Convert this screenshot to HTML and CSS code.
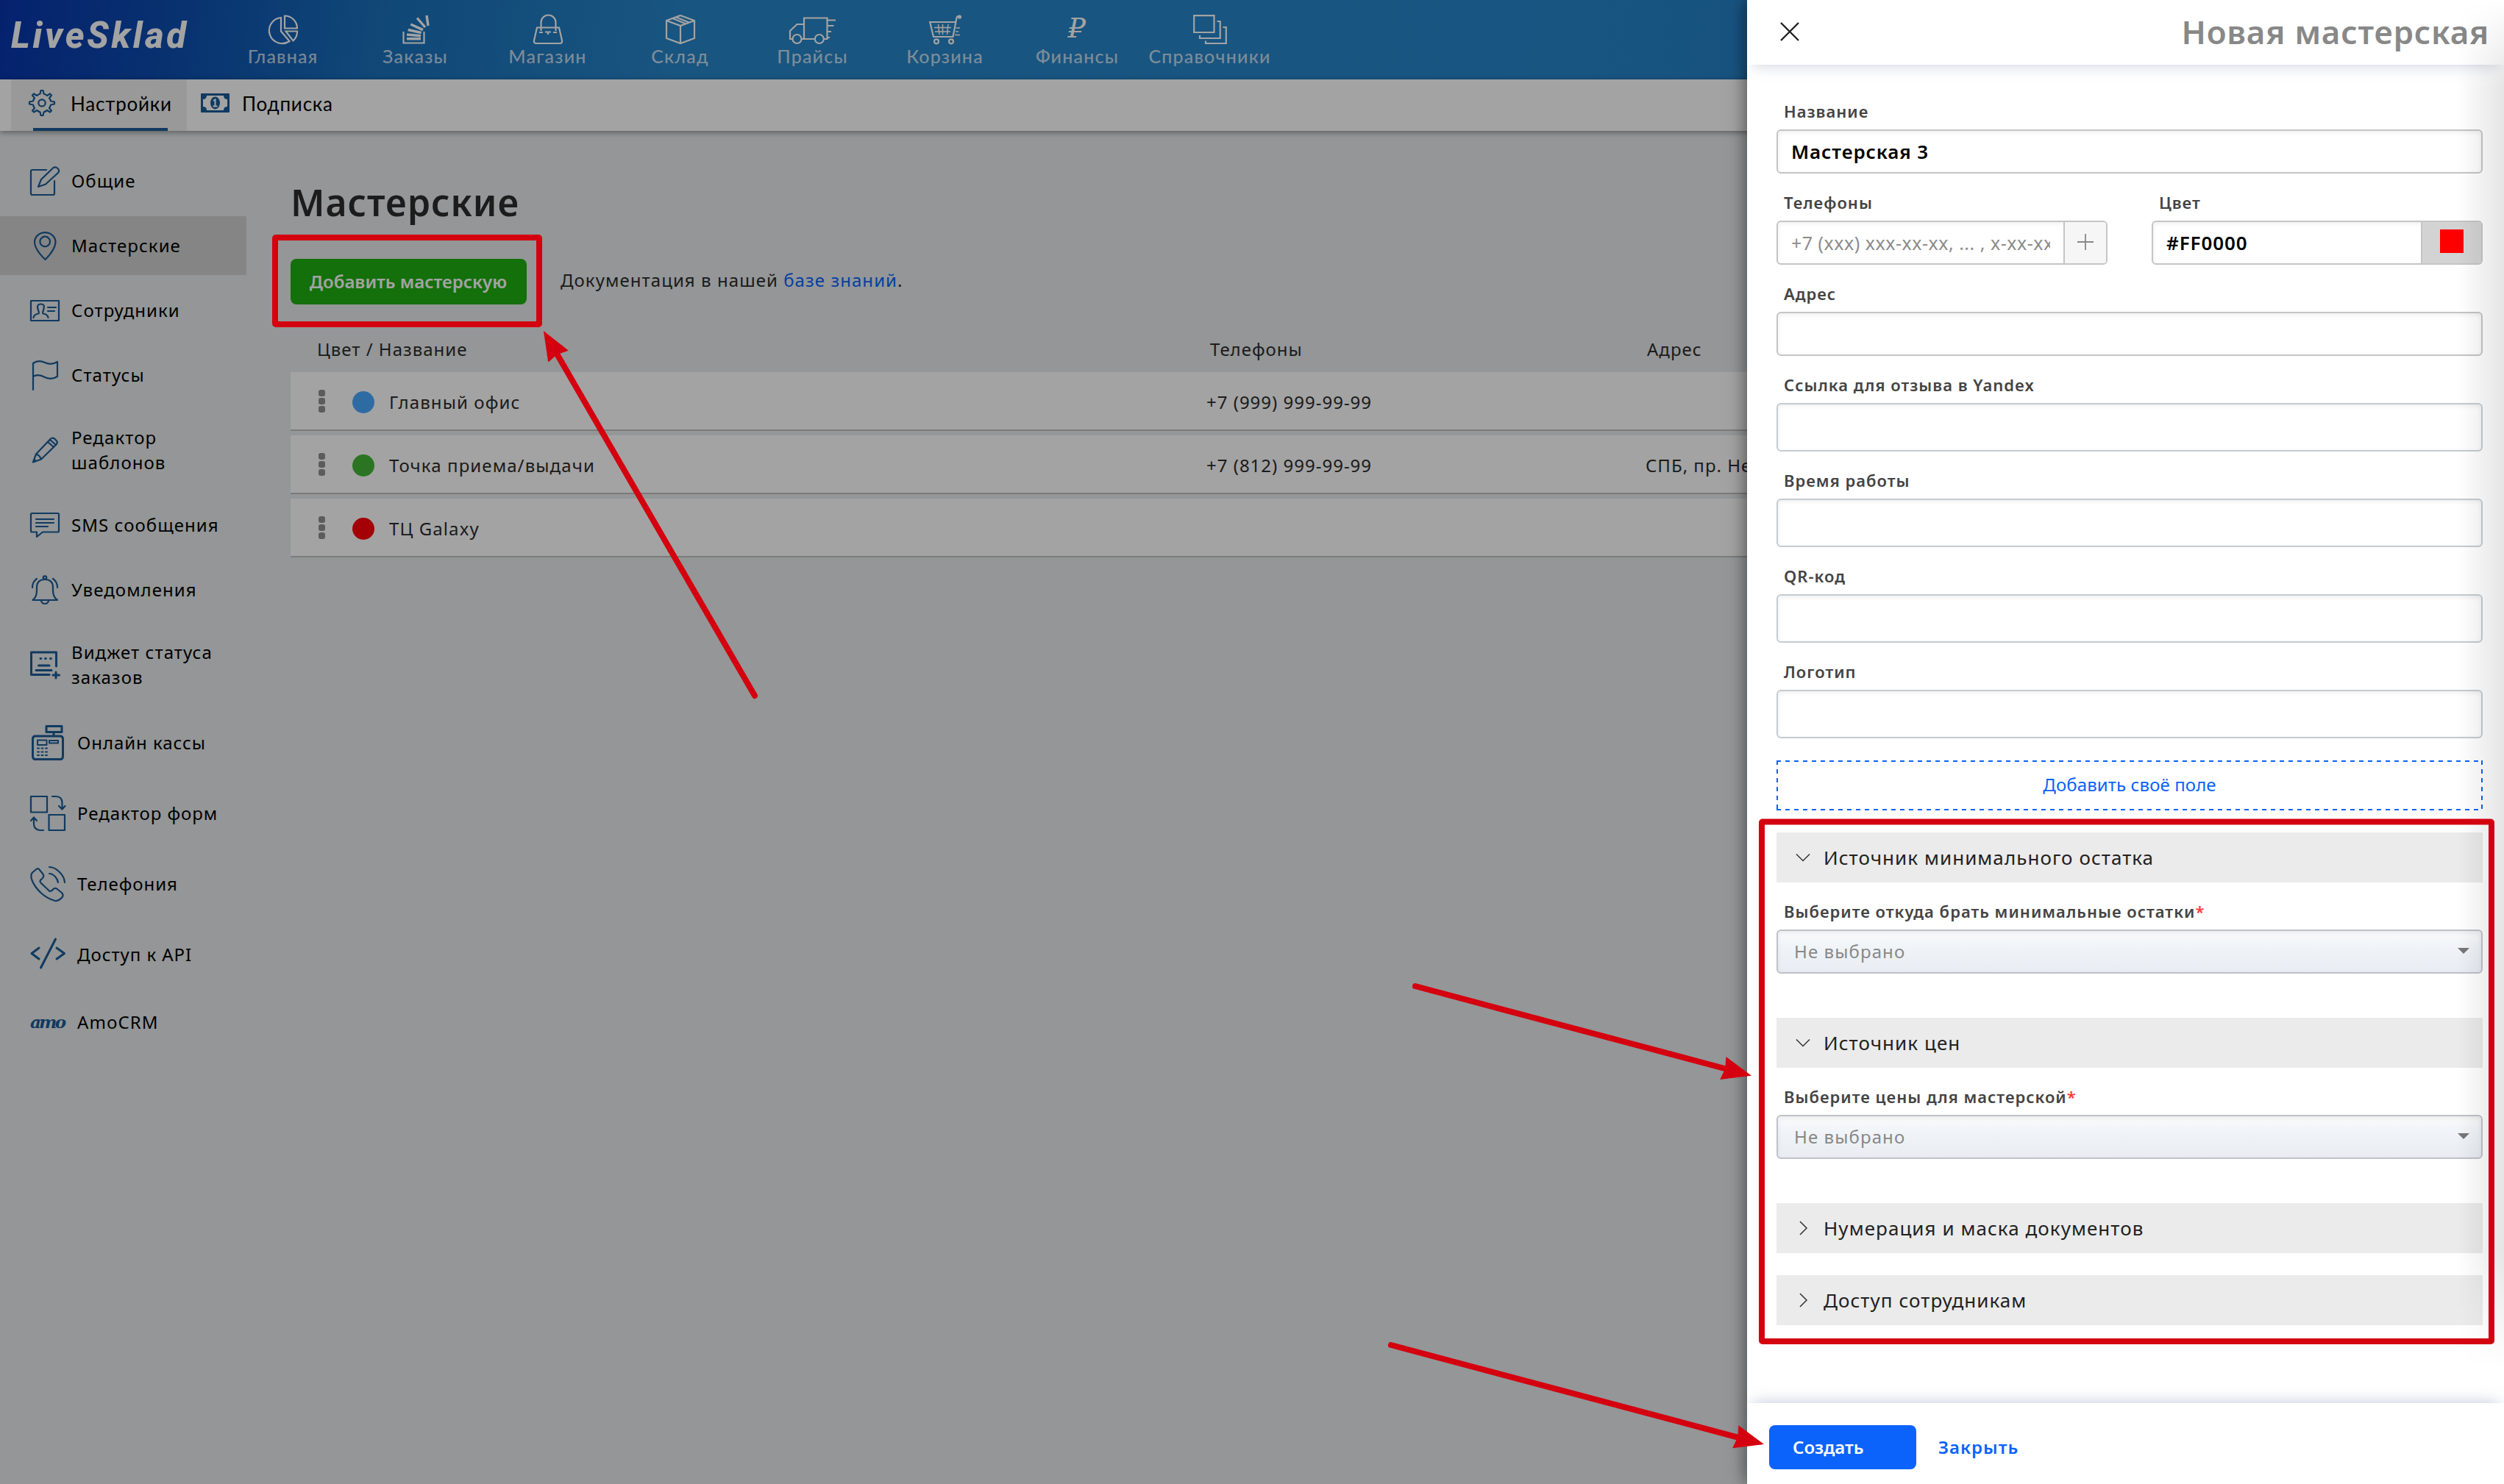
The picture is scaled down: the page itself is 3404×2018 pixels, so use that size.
FILE: index.html
```html
<!DOCTYPE html>
<html lang="ru">
<head>
    <meta charset="UTF-8">
    <meta name="viewport" content="width=device-width, initial-scale=1.0">
    <title>LiveSklad - Мастерские</title>
    <link rel="stylesheet" href="styles.css">
</head>
<body>
    <div class="page">
        <!-- Top navigation -->
        <header class="topbar">
            <div class="logo">LiveSklad</div>
            <nav class="nav">
                <a class="nav-item">
                    <svg width="40" height="40" viewBox="0 0 40 40"><path d="M17 4A17.600 17.600 0 1 0 28.500 36L17 22.500ZM22 1.500A17 17 0 0 1 39 18.500H22ZM23.500 22.500H39A17 17 0 0 1 33.500 35.500Z"/></svg>
                    <span>Главная</span>
                </a>
                <a class="nav-item">
                    <svg width="40" height="40" viewBox="-2 0 40 40"><path d="M1.500 23V38.500H29.500V23"/><path class="thick" d="M6 32.800H25M6 27L25 28.800M7.700 20.500L25.700 24.500M11.300 13L28 20.600M20 4.500L31 17M33 1L35 15"/></svg>
                    <span>Заказы</span>
                </a>
                <a class="nav-item">
                    <svg width="40" height="40" viewBox="0 0 40 40"><path d="M10.500 22V10.500a9.500 9.500 0 0 1 20 0V22M5 17.500H35L39 35q.5 4-3 4H4q-3.500 0-3-4ZM8 24h5M27 24h5M16 23.500h8M20 23v4"/></svg>
                    <span>Магазин</span>
                </a>
                <a class="nav-item">
                    <svg width="40" height="40" viewBox="0 0 40 40"><path d="M20 1L39 8V32L20 39L1 32V8ZM1 8L20 15L39 8M20 15V39M9.500 5L26.500 12M14.500 3.500L31.500 10.500"/></svg>
                    <span>Склад</span>
                </a>
                <a class="nav-item">
                    <svg width="64" height="40" viewBox="0 0 64 40"><path d="M4.500 33H1V22L10.500 13H20M16.500 33H34.500M20 33V4.500H51.500V33H47M51.500 7.500H63M51.500 15H60.500M51.500 23H57M51.500 31H55"/><circle cx="10.500" cy="33" r="6"/><circle cx="40.800" cy="33" r="6"/></svg>
                    <span>Прайсы</span>
                </a>
                <a class="nav-item">
                    <svg width="44" height="40" viewBox="0 0 44 40"><path d="M36 10H1.200L6 30H32.500L37.500 4Q38.500 1 42 2"/><path class="thin" d="M7 17.500H30M8 23H29M12.500 13L14 27M18.500 13V27M26 13L24.500 27M36.500 18H42M36 23H40M35 27.500H42"/><circle cx="10" cy="36.300" r="3"/><circle cx="30" cy="36.300" r="3"/><circle cx="41.500" cy="3" r="1.500"/></svg>
                    <span>Корзина</span>
                </a>
                <a class="nav-item">
                    <i class="ruble">₽</i>
                    <span>Финансы</span>
                </a>
                <a class="nav-item">
                    <svg width="46" height="40" viewBox="0 0 46 40"><path d="M1.200 1.200H28.500V24H1.200ZM32.500 9H36.700V32H9V28M40.500 17H44.800V39H17V35.500"/></svg>
                    <span>Справочники</span>
                </a>
            </nav>
        </header>

        <!-- Section tabs -->
        <div class="subbar">
            <a class="tab tab-active">
                <svg class="gear" width="36" height="36" viewBox="0 0 36 36"><path d="M15.500 5.500L16.500 1H19.500L20.500 5.500Q23.500 6.500 25 8L29 5.500L31 7.500L28 11.500Q29.500 13 30 15.500L35 16.500V19.500L30 20.500Q29.500 23 28 25L31 28.500L29 30.500L25 28Q23 29.500 20.500 30.500L19.500 35H16.500L15.500 30.500Q13 29.500 11 28L7 30.500L5 28.500L8 25Q6.500 23 6 20.500L1 19.500V16.500L6 15.500Q6.500 13 8 11.500L5 7.500L7 5.500L11 8Q13 6.500 15.500 5.500Z"/><circle cx="18" cy="18" r="4.700"/></svg>
                <span>Настройки</span>
            </a>
            <a class="tab">
                <svg class="note" width="39" height="26" viewBox="0 0 39 26"><rect width="39" height="26" rx="1" class="note-fill"/><path class="note-paper" d="M8 3H31Q31 8 36 8V18Q31 18 31 23H8Q8 18 3 18V8Q8 8 8 3Z"/><ellipse cx="19.500" cy="13" rx="6.500" ry="8.500" class="note-fill"/><path class="note-one" d="M17 10L19.500 8.500V17.500M16.500 17.500H22.500"/></svg>
                <span>Подписка</span>
            </a>
        </div>

        <div class="layout">
            <aside class="sidebar">
                <a class="side-item">
                    <svg width="40" height="40" viewBox="0 0 40 40"><path d="M22 5H3Q1 5 1 7V37Q1 39 3 39H31Q33 39 33 37V20M11 28L15 18L31 2.500Q34 0 37.500 3Q40.500 6 38 9L21 24.500Z"/></svg>
                    <span>Общие</span>
                </a>
                <a class="side-item side-active">
                    <svg width="40" height="40" viewBox="0 0 40 40"><path d="M20.500 39Q6 25 6 14.500A14.300 13.500 0 0 1 34.500 14.500Q34.500 25 20.500 39Z"/><circle cx="20.200" cy="14.500" r="6.800"/></svg>
                    <span>Мастерские</span>
                </a>
                <a class="side-item">
                    <svg width="40" height="40" viewBox="0 0 40 40"><path d="M1 7H39V34H1ZM24 16H35M24 21H33M4.500 30Q5 25.500 11.500 24.500Q12.500 23 11 20Q8 11.500 14.500 11.500Q21 11.500 18 20Q16.500 23 17.500 24.500Q24 25.500 24.500 30"/></svg>
                    <span>Сотрудники</span>
                </a>
                <a class="side-item">
                    <svg width="40" height="40" viewBox="0 0 40 40"><path d="M4 40V4Q11-1 20 3Q29 7 37 2V22Q29 27 20 23Q11 18 4 22"/></svg>
                    <span>Статусы</span>
                </a>
                <a class="side-item">
                    <svg width="40" height="40" viewBox="0 0 40 40"><path d="M4 36.500L8 25.500L27.500 5Q30 2.500 33 4.500L35.500 7Q38 10 35.500 12.500L15 32.500ZM8 25.500Q13 27 15 32.500M24 9L32 16M27 6L35 13M5 33L8 35"/></svg>
                    <span>Редактор<br>шаблонов</span>
                </a>
                <a class="side-item">
                    <svg width="40" height="40" viewBox="0 0 40 40"><path d="M2.500 4H37.500Q39 4 39 5.500V28Q39 29.500 37.500 29.500H17L9 36V29.500H2.500Q1 29.500 1 28V5.500Q1 4 2.500 4ZM8 12H32M8 17H32M8 22H24"/></svg>
                    <span>SMS сообщения</span>
                </a>
                <a class="side-item">
                    <svg width="40" height="40" viewBox="0 0 40 40"><path d="M3.500 34Q9 30 9 21V17Q9 6 20 6Q31 6 31 17V21Q31 30 37 34ZM15 35Q16 39 20 39Q24 39 25 35M3 17Q3 9 9 5M37 17Q37 9 31 5"/><circle cx="20" cy="3.500" r="2.200"/></svg>
                    <span>Уведомления</span>
                </a>
                <a class="side-item">
                    <svg class="bold" width="40" height="40" viewBox="0 0 40 40"><path d="M35.500 22V3H1.500V33.500H26M35 30V38M31 34H39.500M11.500 21H26M8 27.500H29M14 11.500h.8M20.500 11.500h.8M27.500 11.500h.8"/></svg>
                    <span>Виджет статуса<br>заказов</span>
                </a>
                <a class="side-item side-big">
                    <svg class="bold" width="48" height="48" viewBox="0 0 48 48"><path d="M22 1.500H43V9.500H22ZM32 10V15M7 15H41Q44.500 15 44.500 19V42Q44.500 46.500 41 46.500H7Q3.500 46.500 3.500 42V19Q3.500 15 7 15Z"/><path class="keys" d="M10 20.500H22.500V27H10ZM26 21H38V24.500H26ZM10 31.500h2M15.500 31.500h2M21 31.500h2M10 36.500h2M15.500 36.500h2M21 36.500h2M10 41h2M15.500 41h2M21 41h2"/></svg>
                    <span>Онлайн кассы</span>
                </a>
                <a class="side-item side-big">
                    <svg width="48" height="48" viewBox="0 0 48 48"><path d="M1 1H23V22.500H1ZM25.500 26H47V47H25.500ZM30 1H35Q43.500 1 43.500 10V17M39 14L43.500 18.500L47.500 14M18 47H13Q5 46 5 38V30M1 34L5 29.500L9 34"/></svg>
                    <span>Редактор форм</span>
                </a>
                <a class="side-item side-big">
                    <svg width="48" height="48" viewBox="0 0 48 48"><path d="M9 3.500L3 8.500Q0 12 2.500 19Q6 28 15 36.500Q24 44.500 34 47Q39 47.500 44 41.500Q45.500 39 43 36L38 32Q34 28 31 31.500Q28.500 35 26 33.500L14.500 22.500Q12 20 15.500 17.500Q20 14 17 10L12.500 4.500Q11 2.500 9 3.500ZM26 1Q33 1 39.500 7.500Q46.500 14 47 22M26 10Q30 10 34 14Q37.500 18 38 22"/></svg>
                    <span>Телефония</span>
                </a>
                <a class="side-item side-big">
                    <svg class="bold" width="48" height="48" viewBox="0 0 48 48"><path d="M12 15L2 22.500L12 30M36 15L46.500 22.500L36 30M34.500 3L14.500 42"/></svg>
                    <span>Доступ к API</span>
                </a>
                <a class="side-item side-amo">
                    <i class="amo">amo</i>
                    <span>AmoCRM</span>
                </a>
            </aside>

            <main class="main">
                <h1>Мастерские</h1>
                <div class="actions">
                    <button class="btn btn-green">Добавить мастерскую</button>
                    <p>Документация в нашей <a class="link">базе знаний</a>.</p>
                </div>
                <div class="table">
                    <div class="table-head">
                        <span>Цвет / Название</span>
                        <span>Телефоны</span>
                        <span>Адрес</span>
                    </div>
                    <div class="row">
                        <div class="name"><span class="drag"><b></b><b></b><b></b></span><span class="dot dot-blue"></span>Главный офис</div>
                        <span>+7 (999) 999-99-99</span>
                        <span></span>
                    </div>
                    <div class="row">
                        <div class="name"><span class="drag"><b></b><b></b><b></b></span><span class="dot dot-green"></span>Точка приема/выдачи</div>
                        <span>+7 (812) 999-99-99</span>
                        <span>СПБ, пр. Невский</span>
                    </div>
                    <div class="row">
                        <div class="name"><span class="drag"><b></b><b></b><b></b></span><span class="dot dot-red"></span>ТЦ Galaxy</div>
                        <span></span>
                        <span></span>
                    </div>
                </div>
            </main>
        </div>
    </div>

    <div class="overlay"></div>

    <!-- New workshop panel -->
    <section class="panel">
        <div class="panel-head">
            <svg width="26" height="26" viewBox="0 0 26 26"><path d="M1 1L25 25M25 1L1 25"/></svg>
            <h2>Новая мастерская</h2>
        </div>
        <form class="panel-body">
            <label>Название</label>
            <input type="text" class="field" value="Мастерская 3">
            <div class="field-cols">
                <div>
                    <label>Телефоны</label>
                    <div class="field group">
                        <input type="text" placeholder="+7 (xxx) xxx-xx-xx, ... , x-xx-xx">
                        <span class="addon addon-plus"><svg width="22" height="22" viewBox="0 0 22 22"><path d="M11 0V22M0 11H22"/></svg></span>
                    </div>
                </div>
                <div>
                    <label>Цвет</label>
                    <div class="field group">
                        <input type="text" value="#FF0000">
                        <span class="addon addon-color"><i class="swatch"></i></span>
                    </div>
                </div>
            </div>
            <label>Адрес</label>
            <input type="text" class="field">
            <label>Ссылка для отзыва в Yandex</label>
            <input type="text" class="field field-tall">
            <label>Время работы</label>
            <input type="text" class="field field-tall">
            <label>QR-код</label>
            <input type="text" class="field field-tall">
            <label>Логотип</label>
            <input type="text" class="field field-tall">
            <a class="add-field">Добавить своё поле</a>

            <div class="accordion">
                <svg width="20" height="20" viewBox="0 0 20 20"><path d="M1 5.500L10 14.500L19 5.500"/></svg>Источник минимального остатка
            </div>
            <label>Выберите откуда брать минимальные остатки<em>*</em></label>
            <div class="field select"><span>Не выбрано</span><i class="caret"></i></div>

            <div class="accordion accordion-far">
                <svg width="20" height="20" viewBox="0 0 20 20"><path d="M1 5.500L10 14.500L19 5.500"/></svg>Источник цен
            </div>
            <label>Выберите цены для мастерской<em>*</em></label>
            <div class="field select"><span>Не выбрано</span><i class="caret"></i></div>

            <div class="accordion accordion-far">
                <svg width="20" height="20" viewBox="0 0 20 20"><path d="M6 1L15 10L6 19"/></svg>Нумерация и маска документов
            </div>
            <div class="accordion">
                <svg width="20" height="20" viewBox="0 0 20 20"><path d="M6 1L15 10L6 19"/></svg>Доступ сотрудникам
            </div>
        </form>
        <div class="panel-foot">
            <button class="btn btn-blue">Создать</button>
            <a class="link">Закрыть</a>
        </div>
        <div class="edge-shade"></div>
    </section>

    <!-- Red marks over the page -->
    <svg class="marks" width="3404" height="2018" viewBox="0 0 3404 2018">
        <defs>
            <marker id="head" markerUnits="userSpaceOnUse" markerWidth="42" markerHeight="34" refX="10" refY="17" orient="auto">
                <path class="mark-head" d="M0 1L40 17L0 33L3 17Z"/>
            </marker>
        </defs>
        <rect x="374" y="323" width="359" height="118" rx="1"/>
        <rect x="2395" y="1117.500" width="992" height="706.500" rx="1"/>
        <path class="arrow" marker-end="url(#head)" d="M1026 946L754 476"/>
        <path class="arrow" marker-end="url(#head)" d="M1924 1341L2352 1455"/>
        <path class="arrow" marker-end="url(#head)" d="M1891 1829L2369 1956.300"/>
    </svg>
</body>
</html>
```
FILE: styles.css
```css
* {
    box-sizing: border-box;
}
body {
    margin: 0;
    width: 3404px;
    height: 2018px;
    overflow: hidden;
    position: relative;
    font-family: "Noto Sans", "Open Sans", sans-serif;
    font-size: 24px;
    letter-spacing: 1px;
    color: #2c2c2c;
    background: #e8ebed;
}
svg {
    display: block;
    flex: none;
    fill: none;
    overflow: visible;
}
.page {
    height: 2018px;
}

/* top bar */
.topbar {
    height: 108px;
    display: flex;
    background: linear-gradient(97deg, #0835ac 0, #0d4eaf 7%, #1970bb 15%, #2785c8 27%, #2886cb 60%, #1f78bd 100%);
}
.logo {
    width: 294px;
    padding: 20px 0 0 15px;
    font-family: Roboto, "Liberation Sans", sans-serif;
    font-size: 49px;
    line-height: 58px;
    font-weight: 800;
    font-style: italic;
    letter-spacing: 3.700px;
    color: #fff;
}
.nav {
    display: flex;
}
.nav-item {
    width: 180px;
    padding: 20px 0 0 1px;
    display: flex;
    flex-direction: column;
    align-items: center;
    font-family: Lato, sans-serif;
    font-size: 25px;
    line-height: 33px;
    font-weight: 500;
    letter-spacing: 1.200px;
    color: rgba(255, 255, 255, 0.72);
    white-space: nowrap;
}
.nav-item svg {
    stroke: #fff;
    stroke-width: 2.2;
}
.nav-item .thick {
    stroke-width: 3.4;
}
.nav-item .thin {
    stroke-width: 1.5;
}
.ruble {
    height: 40px;
    font-family: "DejaVu Serif", serif;
    font-size: 38px;
    line-height: 36px;
    color: #fff;
}

/* tabs */
.subbar {
    height: 70px;
    padding-left: 15px;
    display: flex;
    position: relative;
    background: #fff;
    box-shadow: 0 2px 8px rgba(0, 0, 0, 0.4);
}
.tab {
    display: flex;
    align-items: center;
    padding: 0 0 4px 19px;
    font-family: Lato, sans-serif;
    font-size: 26px;
    letter-spacing: 0.800px;
    color: #000;
}
.tab-active {
    width: 239px;
    padding-left: 24px;
    background: linear-gradient(#1b5c96, #1b5c96) 30px 66px / 183px 4px no-repeat #f0f0f0;
}
.tab svg {
    margin: -2px 21px 0 0;
}
.tab .note {
    margin: -3px 17px 0 0;
}
.gear {
    stroke: #1b5c96;
    stroke-width: 2.2;
    stroke-linejoin: round;
}
.note-fill {
    fill: #1b5c96;
}
.note-paper {
    fill: #fff;
}
.note-one {
    stroke: #fff;
    stroke-width: 2;
}

/* sidebar */
.layout {
    display: flex;
}
.sidebar {
    width: 335px;
    padding-top: 28px;
    display: flex;
    flex-direction: column;
    gap: 8px;
}
.side-item {
    min-height: 80px;
    padding: 20px 0 20px 41px;
    display: flex;
    align-items: center;
    gap: 16px;
    line-height: 34px;
    letter-spacing: 1.050px;
    color: #000;
    white-space: nowrap;
}
.side-item svg {
    stroke: #1b5c96;
    stroke-width: 2.2;
    stroke-linejoin: round;
    stroke-linecap: round;
}
.side-item svg.bold {
    stroke-width: 3;
}
.side-item svg .keys {
    stroke-width: 2;
}
.side-active {
    background: #d0d0d0;
}
.side-big {
    min-height: 88px;
    letter-spacing: 0.950px;
}
.amo {
    width: 48px;
    font-family: "DejaVu Serif", serif;
    font-size: 23px;
    line-height: 24px;
    font-weight: bold;
    letter-spacing: -2.800px;
    color: #1b5c96;
}

/* main */
.main {
    flex: 1;
    padding: 61px 0 0 60px;
}
h1 {
    margin: 0;
    font-size: 50px;
    line-height: 72px;
    font-weight: 600;
    letter-spacing: 1px;
}
.actions {
    height: 62px;
    margin-top: 41px;
    display: flex;
    align-items: center;
    gap: 46px;
}
.actions p {
    margin: 0 0 5px;
    letter-spacing: 1.060px;
}
.btn {
    border: 0;
    border-radius: 8px;
    font: inherit;
    font-weight: 600;
    color: #fff;
}
.btn-green {
    width: 321px;
    height: 62px;
    padding: 0 1px 2px 0;
    letter-spacing: 0;
    background: #1faf10;
}
.link {
    color: #0b63fb;
}
.table {
    margin-top: 32px;
}
.table-head,
.row {
    display: grid;
    grid-template-columns: 1245px 597px 1fr;
    align-items: center;
    white-space: nowrap;
}
.table-head {
    height: 60px;
    padding: 0 0 4px 36px;
    grid-template-columns: 1214px 594px 1fr;
}
.row {
    height: 78px;
    margin-bottom: 8px;
    padding-top: 3px;
    background: #fff;
    box-shadow: 0 2px 0 #c1c1c1;
}
.name {
    display: flex;
    align-items: center;
    padding-left: 38px;
    letter-spacing: 1.100px;
}
.drag {
    display: grid;
    gap: 2px;
    margin: -3px 37px 0 0;
}
.drag b {
    width: 9px;
    height: 9px;
    border-radius: 3px;
    background: #909090;
}
.dot {
    width: 30px;
    height: 30px;
    margin: 0 20px 0 0;
    border-radius: 50%;
}
.dot-blue { background: #4aa8ff; }
.dot-green { background: #44b736; }
.dot-red { background: #ff000b; }

.overlay {
    position: absolute;
    inset: 0;
    background: rgba(0, 0, 0, 0.36);
}

/* side panel */
.panel {
    position: absolute;
    top: 0;
    right: 0;
    width: 1029px;
    height: 2018px;
    display: flex;
    flex-direction: column;
    background: #fff;
    box-shadow: 0 0 24px rgba(0, 0, 0, 0.6);
}
.panel-head {
    height: 88px;
    padding: 0 20px 3px 45px;
    display: flex;
    align-items: center;
    justify-content: space-between;
    box-shadow: 0 10px 18px -8px rgba(100, 120, 160, 0.3);
}
.panel-head svg {
    stroke: #222;
    stroke-width: 2.4;
}
h2 {
    margin: 0;
    font-size: 44px;
    font-weight: 600;
    letter-spacing: 0.800px;
    color: #888;
}
.panel-body {
    flex: 1;
    padding: 24px 29px 0 40px;
}
label {
    display: block;
    height: 64px;
    padding: 23px 0 0 10px;
    font-size: 22px;
    line-height: 32px;
    font-weight: 600;
    letter-spacing: 1px;
    color: #444;
}
label em {
    font-style: normal;
    color: #ff3b3b;
}
input {
    font: inherit;
    font-size: 26px;
    font-weight: 600;
    letter-spacing: 0.900px;
    color: #000;
}
input::placeholder {
    color: #8c8c8c;
    font-size: 25px;
    font-weight: 400;
    letter-spacing: 0.500px;
    opacity: 1;
}
.field {
    display: flex;
    width: 100%;
    height: 60px;
    padding: 0 18px;
    border: 2px solid #c5c5c5;
    border-radius: 6px;
    box-shadow: inset 0 2px 6px rgba(0, 0, 0, 0.07);
}
.field-tall {
    height: 66px;
    border-color: #c4ccd2;
}
.field-cols {
    display: grid;
    grid-template-columns: 450px 450px;
    justify-content: space-between;
}
.group {
    padding: 0 0 0 18px;
    overflow: hidden;
}
.group input {
    flex: 1;
    min-width: 0;
    padding: 0;
    border: 0;
    margin-right: 18px;
    background: none;
}
.addon {
    display: flex;
    align-items: center;
    justify-content: center;
    border-left: 2px solid #c5c5c5;
}
.addon-plus {
    width: 58px;
    padding-bottom: 2px;
    background: #f6f6f6;
}
.addon-plus svg {
    stroke: #888;
    stroke-width: 1.8;
}
.addon-color {
    width: 82px;
    padding-bottom: 4px;
    background: #d3d3d3;
}
.swatch {
    width: 32px;
    height: 32px;
    background: #f00;
}
/* dashed frame with even 6px dashes */
.add-field {
    height: 68px;
    margin: 30px 0;
    display: flex;
    align-items: center;
    justify-content: center;
    padding-bottom: 4px;
    letter-spacing: 0.100px;
    color: #0b63fb;
    background:
        repeating-linear-gradient(90deg, #0b63fb 0 6px, transparent 6px 12px) top / 100% 2px no-repeat,
        repeating-linear-gradient(90deg, #0b63fb 0 6px, transparent 6px 12px) bottom / 100% 2px no-repeat,
        repeating-linear-gradient(#0b63fb 0 6px, transparent 6px 12px) left / 2px 100% no-repeat,
        repeating-linear-gradient(#0b63fb 0 6px, transparent 6px 12px) right / 2px 100% no-repeat;
}
.accordion {
    height: 68px;
    margin-top: 30px;
    padding: 0 26px;
    display: flex;
    align-items: center;
    gap: 18px;
    font-size: 26px;
    letter-spacing: 1.050px;
    color: #222;
    background: #ebebeb;
}
.accordion-far {
    margin-top: 60px;
}
.accordion svg {
    stroke: #333;
    stroke-width: 1.5;
}
.select {
    align-items: center;
    justify-content: space-between;
    padding: 0 16px 2px 22px;
    border-color: #bfc2c8;
    background: linear-gradient(#fafafb, #f0f4f8 40%, #e9edf3);
    letter-spacing: 1.100px;
    color: #888;
}
.caret {
    border: 8px solid transparent;
    border-top-color: #777;
    border-bottom: 0;
}
.panel-foot {
    height: 110px;
    padding: 30px;
    display: flex;
    gap: 30px;
    line-height: 60px;
    font-weight: 600;
    box-shadow: 0 -10px 18px -8px rgba(100, 120, 160, 0.35);
}
.btn-blue {
    width: 200px;
    height: 60px;
    padding: 0 32px;
    text-align: left;
    letter-spacing: 0;
    background: #0b63fb;
}
.panel-foot .link {
    letter-spacing: 1px;
}
.edge-shade {
    position: absolute;
    top: 0;
    right: 0;
    width: 64px;
    height: 1860px;
    background: linear-gradient(to right, transparent, rgba(0, 0, 0, 0.1));
    mask-image: linear-gradient(transparent, #000 120px, #000 1700px, transparent);
}

.marks {
    position: absolute;
    top: 0;
    left: 0;
    stroke: #d4000f;
    stroke-width: 8;
}
.arrow {
    stroke-linecap: round;
}
.mark-head {
    fill: #d4000f;
    stroke: none;
}
```
